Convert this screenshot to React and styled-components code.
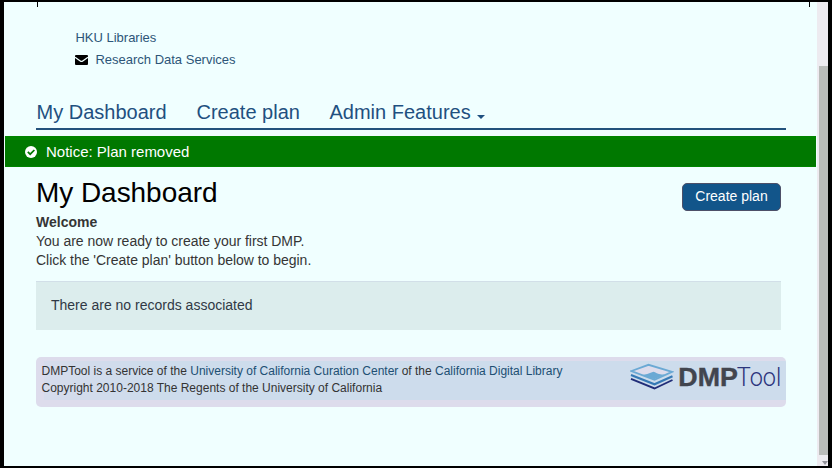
import React from "react";
import styled, { createGlobalStyle } from "styled-components";

const GlobalStyle = createGlobalStyle`
  * { box-sizing: border-box; }
  body { margin: 0; overflow: hidden; background: #000; font-family: "Liberation Sans", Arial, sans-serif; }
`;

const Frame = styled.div`
  display: flex;
  width: 832px;
  height: 468px;
  padding: 2px 4px;
  background: #000;
`;

const Page = styled.div`
  display: flex;
  flex-direction: column;
  width: 813px;
  height: 464px;
  background: #f0ffff;
`;

const BoxEdge = styled.div`
  flex: none;
  width: 773px;
  height: 5px;
  margin-left: 33px;
  border: solid #000;
  border-width: 0 1px;
`;

const Line = styled.span`
  display: block;
  white-space: nowrap;
  font-size: ${(p) => p.$size}px;
  line-height: ${(p) => p.$line}px;
  letter-spacing: ${(p) => p.$track || 0}px;
  font-weight: ${(p) => (p.$bold ? 700 : 400)};
`;

const OrgLinks = styled.header`
  display: flex;
  flex-direction: column;
  height: 93px;
  padding: 20px 0 0 71.4px;
  color: #2d5578;
`;

const MailRow = styled.div`
  display: flex;
  align-items: center;
  height: 22px;
  gap: 7px;
`;

const Nav = styled.nav`
  display: flex;
  width: 750px;
  height: 30px;
  margin-left: 32px;
  border-bottom: 2px solid #23527c;
  color: #1f5080;
`;

const NavItem = styled.a`
  display: flex;
  width: ${(p) => p.$width}px;
  padding-left: 0.5px;
`;

const Caret = styled.svg`
  width: 8px;
  height: 4px;
  margin: 15px 0 0 6px;
`;

const Notice = styled.div`
  display: flex;
  align-items: center;
  width: 811px;
  height: 31px;
  margin: 6px 0 0 1px;
  padding-left: 20px;
  gap: 9px;
  background: #007800;
  border: solid #008500;
  border-width: 4px 0 1px;
  color: #fff;
  svg { margin-top: -2px; }
  span { margin-top: -2px; }
`;

const Main = styled.main`
  display: flex;
  justify-content: space-between;
  width: 745px;
  height: 114px;
  margin-left: 32px;
  padding-top: 8px;
  color: #353535;
`;

const Intro = styled.section``;

const Title = styled.h1`
  margin: 0;
  height: 38px;
  color: #000;
  font-weight: 400;
`;

const PlanButton = styled.button`
  width: 99px;
  height: 28px;
  margin: 8px 0 0;
  padding: 0 0 2px;
  border: 1px solid #4d5068;
  border-radius: 5px;
  background: #12558a;
  color: #fff;
  font-family: inherit;
`;

const Records = styled.div`
  width: 745px;
  height: 49px;
  margin-left: 32px;
  padding: 14px 0 0 15px;
  border-top: 1px solid #d2dfe8;
  background: #dceded;
  color: #303945;
`;

const Footer = styled.footer`
  display: flex;
  justify-content: space-between;
  width: 750px;
  height: 50px;
  margin: 27px 0 0 32px;
  padding: 6px 6px 0 5.5px;
  border-radius: 5px;
  background:
    linear-gradient(90deg, #d6dcec, #cddcec 15%, #cddcec) 8px 4px / 742px 39px no-repeat,
    #dddcec;
  color: #333;
  a { color: #204f73; }
`;

const Brand = styled.div`
  display: flex;
  width: 150px;
`;

const Wordmark = styled.svg`
  width: 106px;
  height: 36px;
  overflow: visible;
`;

const Track = styled.div`
  display: flex;
  flex-direction: column;
  width: 11px;
  height: 464px;
  padding: 64px 0 0 2px;
  background: #edebf0;
`;

const Thumb = styled.div`
  width: 9px;
  height: 389px;
  background: #babcba;
`;

const ScrollArrow = styled.svg`
  width: 6px;
  height: 4px;
  margin: 6px 0 0 3px;
`;

function MailIcon() {
  return (
    <svg width="13" height="10" viewBox="0 0 13 10">
      <rect width="13" height="10" rx="1" fill="#000" />
      <path d="M0 2.2 5.3 6Q6.5 6.9 7.7 6L13 2.2" fill="none" stroke="#f0ffff" strokeWidth="1.3" />
    </svg>
  );
}

function CheckIcon() {
  return (
    <svg width="12" height="12" viewBox="0 0 12 12">
      <circle cx="6" cy="6" r="6" fill="#fff" />
      <path d="m2.8 5.8 2.4 2.4 4.2-4.2" fill="none" stroke="#007800" strokeWidth="1.7" />
    </svg>
  );
}

function LayersIcon() {
  return (
    <svg width="44" height="28" viewBox="0 0 44 28">
      <path d="M1 15.8 24.5 25.5 42.5 17" fill="none" stroke="#202d78" strokeWidth="1.9" />
      <path d="M1 12 24.5 21.3 42.5 13.2" fill="none" stroke="#3679b5" strokeWidth="2.2" />
      <path d="M1.5 8 18.5 1.8 42 8.8 24.5 16.8Z" fill="#dddcec" stroke="#6ba9d4" strokeWidth="1.8" />
      <path d="M11 12.2Q18 11.2 22 9.2Q23.5 8.4 25 9.2Q28 11.4 35 11.6L24.5 16.3Z" fill="#6ba9d4" />
    </svg>
  );
}

export default function App() {
  return (
    <>
      <GlobalStyle />
      <Frame>
        <Page>
          <BoxEdge />
          <OrgLinks>
            <Line $size={13} $line={22}>HKU Libraries</Line>
            <MailRow>
              <MailIcon />
              <Line $size={13} $line={22}>Research Data Services</Line>
            </MailRow>
          </OrgLinks>
          <Nav>
            <NavItem $width={160}><Line $size={20} $line={24}>My Dashboard</Line></NavItem>
            <NavItem $width={133}><Line $size={20} $line={24}>Create plan</Line></NavItem>
            <NavItem $width={170}>
              <Line $size={20} $line={24}>Admin Features</Line>
              <Caret viewBox="0 0 8 4"><path d="M0 0h8L4 4z" fill="#1f5080" /></Caret>
            </NavItem>
          </Nav>
          <Notice>
            <CheckIcon />
            <Line $size={15} $line={20}>Notice: Plan removed</Line>
          </Notice>
          <Main>
            <Intro>
              <Title><Line $size={28} $line={36} $track={-0.05}>My Dashboard</Line></Title>
              <Line $size={14} $line={19} $bold>Welcome</Line>
              <Line $size={14} $line={19} $track={-0.02}>You are now ready to create your first DMP.</Line>
              <Line $size={14} $line={19} $track={-0.02}>Click the 'Create plan' button below to begin.</Line>
            </Intro>
            <PlanButton><Line $size={14} $line={24}>Create plan</Line></PlanButton>
          </Main>
          <Records><Line $size={14} $line={18}>There are no records associated</Line></Records>
          <Footer>
            <div>
              <Line $size={12} $line={17}>
                DMPTool is a service of the <a>University of California Curation Center</a> of the <a>California Digital Library</a>
              </Line>
              <Line $size={12} $line={17}>Copyright 2010-2018 The Regents of the University of California</Line>
            </div>
            <Brand>
              <LayersIcon />
              <Wordmark>
                <text x="4.3" y="22.7" textLength="59.5" lengthAdjust="spacingAndGlyphs" fontSize="25.5" fontWeight="700" fill="#42454e" stroke="#42454e" strokeWidth="0.4">DMP</text>
                <text x="62.8" y="22.7" textLength="44.5" lengthAdjust="spacingAndGlyphs" fontFamily="Roboto" fontWeight="300" fontSize="25" fill="#2c357c">Tool</text>
              </Wordmark>
            </Brand>
          </Footer>
        </Page>
        <Track>
          <Thumb />
          <ScrollArrow viewBox="0 0 6 4"><path d="M0 0h6L3 4z" fill="#92929a" /></ScrollArrow>
        </Track>
      </Frame>
    </>
  );
}
